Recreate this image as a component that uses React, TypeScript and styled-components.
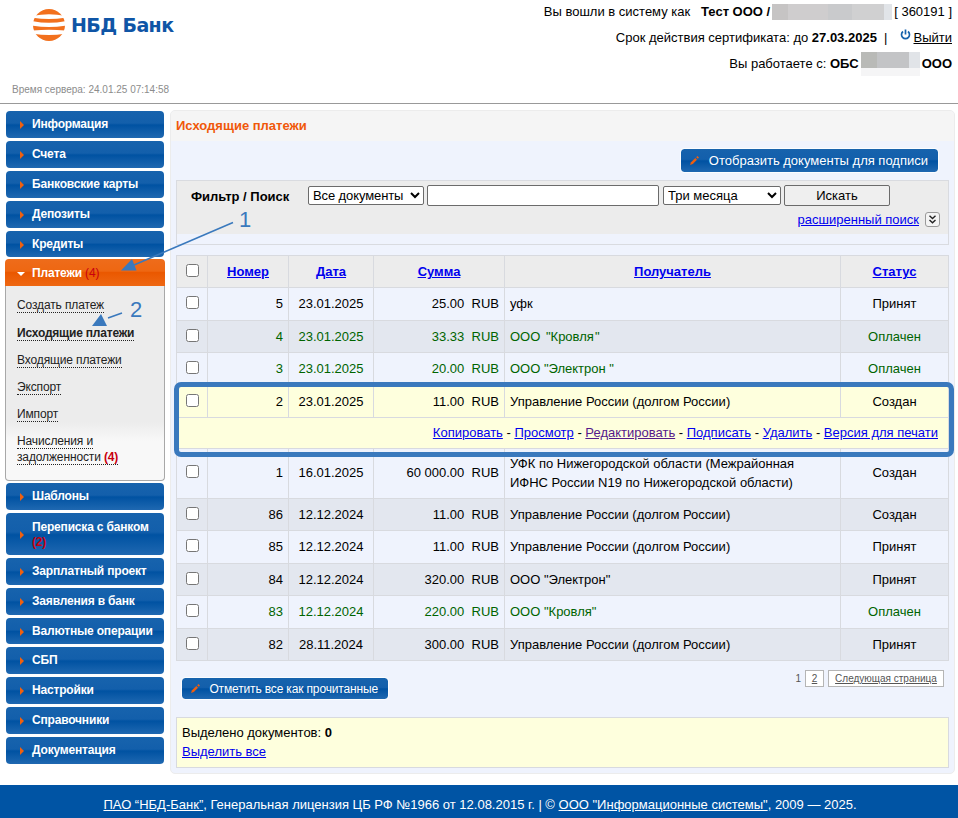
import React from "react";
import styled, { createGlobalStyle, css } from "styled-components";

const GlobalStyle = createGlobalStyle`
  * { box-sizing: border-box; }
  html, body { margin: 0; padding: 0; background: #fff; }
  body { font-family: "Liberation Sans", Arial, sans-serif; font-size: 13px; color: #000; }
  a { color: #0000ee; }
`;

const Page = styled.div`
  position: relative;
  width: 958px;
  height: 818px;
  overflow: hidden;
  display: flex;
  flex-direction: column;
`;

/* ---------- header ---------- */

const Header = styled.header`
  height: 104px;
  flex: none;
  display: flex;
  justify-content: space-between;
  border-bottom: 1px solid #999;
`;

const Brand = styled.div`
  display: flex;
  flex-direction: column;
  padding: 8px 0 0 12px;
`;

const LogoRow = styled.div`
  display: flex;
  align-items: center;
  height: 34px;
  padding-left: 20px;
`;

const LogoText = styled.span`
  margin-left: 5px;
  font: bold 19px/34px "DejaVu Sans", sans-serif;
  letter-spacing: -0.6px;
  color: #0f55a6;
  white-space: nowrap;
`;

const ServerTime = styled.div`
  margin-top: 41px;
  font-size: 10px;
  line-height: 14px;
  color: #8c8c8c;
  white-space: nowrap;
`;

const Session = styled.div`
  padding: 0 6px 0 0;
  text-align: right;
`;

const SessionLine = styled.div<{ $h: number }>`
  height: ${(p) => p.$h}px;
  display: flex;
  align-items: center;
  justify-content: flex-end;
  white-space: pre;
`;

const Masked = styled.span<{ $w: number; $h: number; $bg: string }>`
  width: ${(p) => p.$w}px;
  height: ${(p) => p.$h}px;
  margin: 0 2px;
  background: ${(p) => p.$bg};
`;

const LogoutLink = styled.a`
  color: #000;
  text-decoration: underline;
`;

const PowerIcon = styled.svg`
  margin: -4px 3px 0 12px;
`;

/* ---------- body ---------- */

const Columns = styled.div`
  flex: none;
  height: 681px;
  display: flex;
  align-items: flex-start;
  padding: 6px 3px 0 5px;
`;

const Sidebar = styled.nav`
  width: 160px;
  flex: none;
  margin: 1px 5px 0 0;
  display: flex;
  flex-direction: column;
`;

const itemActive = css`
  margin-left: 0;
  margin-right: 0;
  padding-top: 2px;
  border-radius: 4px 4px 0 0;
  background: linear-gradient(#ee6c1b 0, #ee6712 45%, #ea5800 50%, #ee6712 100%);
`;

const MenuItem = styled.div<{ $h?: number; $gap?: number; $active?: boolean }>`
  height: ${(p) => p.$h ?? 27}px;
  margin: 0 1px ${(p) => p.$gap ?? 3}px;
  padding-top: ${(p) => ((p.$h ?? 27) > 30 ? 1 : 0)}px;
  flex: none;
  display: flex;
  align-items: center;
  border-radius: 4px;
  background: linear-gradient(#1763ad 0, #135fab 45%, #0052a2 52%, #1f68b1 100%);
  ${(p) => p.$active && itemActive}
`;

const Marker = styled.svg<{ $active?: boolean }>`
  flex: none;
  width: 10px;
  height: 8px;
  margin: 1px ${(p) => (p.$active ? 5 : 6)}px 0 ${(p) => (p.$active ? 12 : 10)}px;
`;

const MenuLabel = styled.span`
  font-weight: bold;
  font-size: 12px;
  line-height: 15px;
  letter-spacing: -0.18px;
  color: #fff;
`;

const Count = styled.b`
  color: #c8000f;
`;

const ActiveCount = styled(Count)`
  font-weight: normal;
`;

const SubMenu = styled.div`
  height: 195px;
  margin-bottom: 2px;
  padding: 11px 10px 0 11px;
  border: 1px solid #a8a8a8;
  border-top: 0;
  border-radius: 0 0 4px 4px;
  background: linear-gradient(#ececec 0, #ececec 70%, #f8f8f8 80%, #f8f8f8 100%);
  display: flex;
  flex-direction: column;
  align-items: flex-start;
`;

const SubRow = styled.div<{ $h?: number; $bold?: boolean }>`
  height: ${(p) => p.$h ?? 27}px;
  flex: none;
  font-size: 12px;
  line-height: 16px;
  font-weight: ${(p) => (p.$bold ? "bold" : "normal")};
  letter-spacing: ${(p) => (p.$bold ? -0.2 : -0.13)}px;
`;

const SubLink = styled.span`
  color: #222;
  border-bottom: 1px dotted #222;
  white-space: nowrap;
  display: inline-block;
  line-height: 14px;
`;

/* ---------- main panel ---------- */

const Panel = styled.main`
  width: 785px;
  height: 664px;
  flex: none;
  border: 1px solid #ececec;
  border-radius: 5px;
  background: #eff3fd;
  overflow: hidden;
`;

const PanelTitle = styled.h1`
  margin: 0;
  height: 30px;
  padding-left: 5px;
  background: #f5f5f5;
  color: #f0580a;
  font-size: 13px;
  line-height: 29px;
`;

const PanelBody = styled.div`
  padding: 8px 5px 0;
  display: flex;
  flex-direction: column;
`;

const ActionButton = styled.button<{ $w: number; $h: number; $fs: number; $track?: number }>`
  width: ${(p) => p.$w}px;
  height: ${(p) => p.$h}px;
  padding: 0 10px 0 8px;
  border: 0;
  border-radius: 3px;
  outline: 1px solid #fbfdff;
  display: flex;
  align-items: center;
  justify-content: space-between;
  background: linear-gradient(#1763ad 0, #135fab 45%, #0052a2 52%, #1f68b1 100%);
  color: #fff;
  font: ${(p) => p.$fs}px "Liberation Sans", sans-serif;
  letter-spacing: ${(p) => p.$track ?? 0}px;
  white-space: nowrap;
`;

const TopActions = styled.div`
  display: flex;
  justify-content: flex-end;
  padding-right: 11px;
`;

const Filter = styled.section`
  margin-top: 8px;
  height: 65px;
  border: 1px solid #d9dbe0;
  background: linear-gradient(#ececec 0, #ececec 53px, transparent 53px);
  padding-top: 4px;
`;

const FilterRow = styled.div`
  display: flex;
  align-items: center;
  height: 21px;
  padding-left: 14px;
`;

const FilterLabel = styled.b`
  width: 117px;
  padding-top: 2px;
`;

const Select = styled.select<{ $w: number; $track?: number }>`
  width: ${(p) => p.$w}px;
  height: 19px;
  padding: 0;
  border: 1px solid #6b6b6b;
  border-radius: 2px;
  background: #fff;
  color: #000;
  font: 13px "Liberation Sans", sans-serif;
  letter-spacing: ${(p) => p.$track ?? 0}px;
`;

const SearchInput = styled.input`
  width: 232px;
  height: 21px;
  margin: 0 4px 0 3px;
  border: 1px solid #6b6b6b;
  border-radius: 2px;
  background: #fff;
`;

const SearchButton = styled.button`
  width: 106px;
  height: 21px;
  margin-left: 3px;
  padding: 0;
  border: 1px solid #6b6b6b;
  border-radius: 2px;
  background: #efefef;
  color: #000;
  font: 13px "Liberation Sans", sans-serif;
`;

const AdvancedRow = styled.div`
  height: 27px;
  display: flex;
  align-items: center;
  justify-content: flex-end;
  gap: 6px;
  padding-right: 8px;
`;

/* ---------- table ---------- */

const Table = styled.div`
  margin-top: 10px;
  border: 1px solid #d8dadf;
  border-width: 1px 0 0 1px;
`;

type RowTone = "head" | "light" | "dark" | "picked";
const toneBg: Record<RowTone, string> = {
  head: "#ececec",
  light: "#eff3fd",
  dark: "#e3e7ef",
  picked: "#feffdd",
};

const Cell = styled.div<{ $align?: "center" | "flex-end" | "flex-start"; $bold?: boolean; $wordGap?: number }>`
  display: flex;
  align-items: center;
  justify-content: ${(p) => p.$align ?? "center"};
  padding: 0 5px;
  border-right: 1px solid #d8dadf;
  border-bottom: 1px solid #d8dadf;
  font-weight: ${(p) => (p.$bold ? "bold" : "normal")};
  line-height: 19px;
  word-spacing: ${(p) => p.$wordGap ?? 0}px;
  white-space: pre;
`;

const Row = styled.div<{ $h: number; $tone: RowTone; $paid?: boolean }>`
  display: grid;
  grid-template-columns: 31px 81px 85px 131px 336px 108px;
  height: ${(p) => p.$h}px;
  background: ${(p) => toneBg[p.$tone]};
  color: ${(p) => (p.$paid ? "#006400" : "#000")};

  ${Cell} {
    padding-bottom: ${(p) => (p.$h > 32 ? 2 : 0)}px;
  }
`;

const ActionsRow = styled.div`
  height: 31px;
  display: flex;
  align-items: center;
  justify-content: flex-end;
  padding: 0 10px 1px 0;
  border-right: 1px solid #d8dadf;
  border-bottom: 1px solid #d8dadf;
  background: ${toneBg.picked};
  white-space: pre;
`;

const VisitedLink = styled.a`
  color: #551a8b;
`;

const Check = styled.input.attrs({ type: "checkbox" })`
  width: 13px;
  height: 13px;
  margin: 0 0 2px 1px;
`;

const BottomBar = styled.div`
  display: flex;
  justify-content: space-between;
  align-items: flex-start;
  padding: 9px 5px 0 6px;
  height: 56px;
`;

const MarkAll = styled.div`
  padding-top: 8px;
`;

const Pager = styled.div`
  display: flex;
  align-items: center;
  font-size: 10px;
  color: #555;
`;

const PageLink = styled.span<{ $w: number }>`
  width: ${(p) => p.$w}px;
  height: 17px;
  border: 1px solid #b5b5b5;
  background: #fff;
  text-align: center;
  text-decoration: underline;
  line-height: 16px;
  margin-left: 4px;
  white-space: nowrap;
`;

const Summary = styled.div`
  height: 51px;
  padding: 5px;
  border: 1px solid #d8dadf;
  background: #feffdd;
  line-height: 19px;
`;

const Footer = styled.footer`
  height: 33px;
  flex: none;
  display: flex;
  align-items: center;
  justify-content: center;
  padding: 5px 0 0 2px;
  background: #0054a4;
  color: #fff;
  white-space: pre;
  a { color: #fff; }
`;

/* ---------- tutorial marks over the page ---------- */

const Frame = styled.div`
  position: absolute;
  left: 174px;
  top: 382px;
  width: 780px;
  height: 75px;
  border: 5px solid #3a79bd;
  border-radius: 7px;
`;

const Marks = styled.svg`
  position: absolute;
  left: 85px;
  top: 205px;
`;

const MarkNumber = styled.span<{ $x: number; $y: number }>`
  position: absolute;
  left: ${(p) => p.$x}px;
  top: ${(p) => p.$y}px;
  font: 22px/24px "Liberation Sans", sans-serif;
  color: #3a79bd;
`;

/* ---------- pieces ---------- */

const Globe = () => (
  <svg width="34" height="34" viewBox="0 0 34 34">
    <defs>
      <clipPath id="globe">
        <ellipse cx="17" cy="17" rx="16" ry="16" />
      </clipPath>
    </defs>
    <g clipPath="url(#globe)" fill="#f2701d">
      <path d="M0 0H34V8Q17 4.500 0 8Z" />
      <path d="M0 9.500Q17 12.500 34 9.500V13Q17 16.500 0 13Z" />
      <path d="M0 18Q17 21 34 18V23Q17 21.500 0 23Z" transform="translate(0 -0.500)" />
      <path d="M0 25.500Q17 28.500 34 25.500V34H0Z" />
    </g>
  </svg>
);

const Pencil = () => (
  <svg width="11" height="11" viewBox="0 0 11 11">
    <path d="M1 10L2 7.200L6.300 3L8 4.700L3.800 9Z" fill="#ee5f10" />
    <path d="M7.200 2.200L8.400 1L10 2.600L8.800 3.800Z" fill="#ee5f10" />
  </svg>
);

type MenuEntry = { label: string; count?: string; h?: number; gap?: number };

const upper: MenuEntry[] = [
  { label: "Информация" },
  { label: "Счета" },
  { label: "Банковские карты" },
  { label: "Депозиты" },
  { label: "Кредиты", h: 26, gap: 2 },
];
const lower: MenuEntry[] = [
  { label: "Шаблоны" },
  { label: "Переписка с банком", count: "(2)", h: 42 },
  { label: "Зарплатный проект" },
  { label: "Заявления в банк" },
  { label: "Валютные операции", h: 26 },
  { label: "СБП" },
  { label: "Настройки" },
  { label: "Справочники" },
  { label: "Документация" },
];

const MenuButton = ({ item }: { item: MenuEntry }) => (
  <MenuItem $h={item.h} $gap={item.gap}>
    <Marker viewBox="0 0 10 8">
      <path d="M4 0V8L8 4Z" fill="#f0600f" />
    </Marker>
    <MenuLabel>
      {item.label}
      {item.count && (
        <>
          <br />
          <Count>{item.count}</Count>
        </>
      )}
    </MenuLabel>
  </MenuItem>
);

type Payment = {
  no: string;
  date: string;
  sum: string;
  to: string;
  status: string;
  h: number;
  tone: RowTone;
  paid?: boolean;
  wordGap?: number;
};

const GOV = "Управление России (долгом России)";
const payments: Payment[] = [
  { no: "5", date: "23.01.2025", sum: "25.00", to: "уфк", status: "Принят", h: 33, tone: "light" },
  { no: "4", date: "23.01.2025", sum: "33.33", to: 'ООО "Кровля\u200a"', status: "Оплачен", h: 32, tone: "dark", paid: true, wordGap: 2 },
  { no: "3", date: "23.01.2025", sum: "20.00", to: 'ООО "Электрон "', status: "Оплачен", h: 33, tone: "light", paid: true },
  { no: "2", date: "23.01.2025", sum: "11.00", to: GOV, status: "Создан", h: 32, tone: "picked" },
  { no: "1", date: "16.01.2025", sum: "60 000.00", to: "УФК по Нижегородской области (Межрайонная\nИФНС России N19 по Нижегородской области)", status: "Создан", h: 50, tone: "light" },
  { no: "86", date: "12.12.2024", sum: "11.00", to: GOV, status: "Создан", h: 32, tone: "dark" },
  { no: "85", date: "12.12.2024", sum: "11.00", to: GOV, status: "Принят", h: 33, tone: "light" },
  { no: "84", date: "12.12.2024", sum: "320.00", to: 'ООО "Электрон"', status: "Принят", h: 32, tone: "dark" },
  { no: "83", date: "12.12.2024", sum: "220.00", to: 'ООО "Кровля"', status: "Оплачен", h: 33, tone: "light", paid: true },
  { no: "82", date: "28.11.2024", sum: "300.00", to: GOV, status: "Принят", h: 32, tone: "dark" },
];

const PaymentRow = ({ p }: { p: Payment }) => (
  <>
    <Row $h={p.h} $tone={p.tone} $paid={p.paid}>
      <Cell><Check /></Cell>
      <Cell $align="flex-end">{p.no}</Cell>
      <Cell>{p.date}</Cell>
      <Cell $align="flex-end">{p.sum + "  RUB"}</Cell>
      <Cell $align="flex-start" $wordGap={p.wordGap}>{p.to}</Cell>
      <Cell>{p.status}</Cell>
    </Row>
    {p.tone === "picked" && (
      <ActionsRow>
        <a href="#">Копировать</a> - <a href="#">Просмотр</a> - <VisitedLink href="#">Редактировать</VisitedLink> - <a href="#">Подписать</a> - <a href="#">Удалить</a> - <a href="#">Версия для печати</a>
      </ActionsRow>
    )}
  </>
);

export default function App() {
  return (
    <Page>
      <GlobalStyle />
      <Header>
        <Brand>
          <LogoRow>
            <Globe />
            <LogoText>НБД Банк</LogoText>
          </LogoRow>
          <ServerTime>Время сервера: 24.01.25 07:14:58</ServerTime>
        </Brand>
        <Session>
          <SessionLine $h={23}>
            {"Вы вошли в систему как   "}
            <b>Тест ООО /</b>
            <Masked $w={120} $h={16} $bg="linear-gradient(90deg,#c6c4c4 0 16px,#cfcdce 16px 56px,#c9cacc 56px 80px,#d0d0d1 80px 112px,#e1e4e8 112px)" />
            {"[ 360191 ]"}
          </SessionLine>
          <SessionLine $h={28}>
            Срок действия сертификата: до <b>27.03.2025</b>{"  |"}
            <PowerIcon width="11" height="12" viewBox="0 0 11 12">
              <path d="M3 2.500A4 4 0 1 0 8 2.500M5.500 0.500V5.500" fill="none" stroke="#1763ad" strokeWidth="1.700" />
            </PowerIcon>
            <LogoutLink>Выйти</LogoutLink>
          </SessionLine>
          <SessionLine $h={25}>
            {"Вы работаете с: "}
            <b>ОБС</b>
            <Masked $w={59} $h={24} $bg="linear-gradient(transparent 0 16px,#f5f5f6 16px),linear-gradient(90deg,#b9bab7 0 16px,#c3c4c6 16px 48px,#e1e4e8 48px)" />
            <b>ООО</b>
          </SessionLine>
        </Session>
      </Header>

      <Columns>
        <Sidebar>
          {upper.map((i) => <MenuButton key={i.label} item={i} />)}
          <MenuItem $active $gap={0}>
            <Marker $active viewBox="0 0 10 8">
              <path d="M0 2H8L4 6Z" fill="#fff" />
            </Marker>
            <MenuLabel>Платежи <ActiveCount>(4)</ActiveCount></MenuLabel>
          </MenuItem>
          <SubMenu>
            <SubRow $h={28}><SubLink>Создать платеж</SubLink></SubRow>
            <SubRow $bold><SubLink>Исходящие платежи</SubLink></SubRow>
            <SubRow><SubLink>Входящие платежи</SubLink></SubRow>
            <SubRow><SubLink>Экспорт</SubLink></SubRow>
            <SubRow><SubLink>Импорт</SubLink></SubRow>
            <SubRow>
              <SubLink>Начисления и</SubLink>
              <br />
              <SubLink>задолженности <Count>(4)</Count></SubLink>
            </SubRow>
          </SubMenu>
          {lower.map((i) => <MenuButton key={i.label} item={i} />)}
        </Sidebar>

        <Panel>
          <PanelTitle>Исходящие платежи</PanelTitle>
          <PanelBody>
            <TopActions>
              <ActionButton $w={257} $h={23} $fs={13}>
                <Pencil />
                <span>Отобразить документы для подписи</span>
              </ActionButton>
            </TopActions>
            <Filter>
              <FilterRow>
                <FilterLabel>Фильтр / Поиск</FilterLabel>
                <Select $w={116} $track={-0.1}><option>Все документы</option></Select>
                <SearchInput />
                <Select $w={118}><option>Три месяца</option></Select>
                <SearchButton>Искать</SearchButton>
              </FilterRow>
              <AdvancedRow>
                <a href="#">расширенный поиск</a>
                <svg width="15" height="15" viewBox="0 0 15 15">
                  <rect x="0.500" y="0.500" width="14" height="14" rx="2.500" fill="#f4f4f4" stroke="#9a9a9a" />
                  <path d="M4.500 3.800L7.500 6.500L10.500 3.800M4.500 8L7.500 10.700L10.500 8" fill="none" stroke="#222" strokeWidth="1.400" />
                </svg>
              </AdvancedRow>
            </Filter>
            <Table>
              <Row $h={32} $tone="head">
                <Cell><Check /></Cell>
                {["Номер", "Дата", "Сумма", "Получатель", "Статус"].map((h) => (
                  <Cell key={h} $bold><a href="#">{h}</a></Cell>
                ))}
              </Row>
              {payments.map((p) => <PaymentRow key={p.no} p={p} />)}
            </Table>
            <BottomBar>
              <MarkAll>
                <ActionButton $w={206} $h={21} $fs={12} $track={-0.15}>
                  <Pencil />
                  <span>Отметить все как прочитанные</span>
                </ActionButton>
              </MarkAll>
              <Pager>
                1<PageLink $w={19}>2</PageLink>
                <PageLink $w={116}>Следующая страница</PageLink>
              </Pager>
            </BottomBar>
            <Summary>
              Выделено документов: <b>0</b>
              <br />
              <a href="#">Выделить все</a>
            </Summary>
          </PanelBody>
        </Panel>
      </Columns>

      <Footer>
        <span>
          <a href="#">ПАО “НБД-Банк”</a>, Генеральная лицензия ЦБ РФ №1966 от 12.08.2015 г. | © <a href="#">ООО "Информационные системы"</a>, 2009 — 2025.
        </span>
      </Footer>

      <Frame />
      <Marks width="160" height="125" viewBox="85 205 160 125">
        <path d="M233 222.500L134 265" stroke="#3a79bd" strokeWidth="1.600" />
        <path d="M121 270.500L132 259L136.500 270.500Z" fill="#3a79bd" />
        <path d="M122 313L108 318" stroke="#3a79bd" strokeWidth="1.600" />
        <path d="M92 326L101 314L107 326Z" fill="#3a79bd" />
      </Marks>
      <MarkNumber $x={239} $y={208}>1</MarkNumber>
      <MarkNumber $x={130} $y={298}>2</MarkNumber>
    </Page>
  );
}
